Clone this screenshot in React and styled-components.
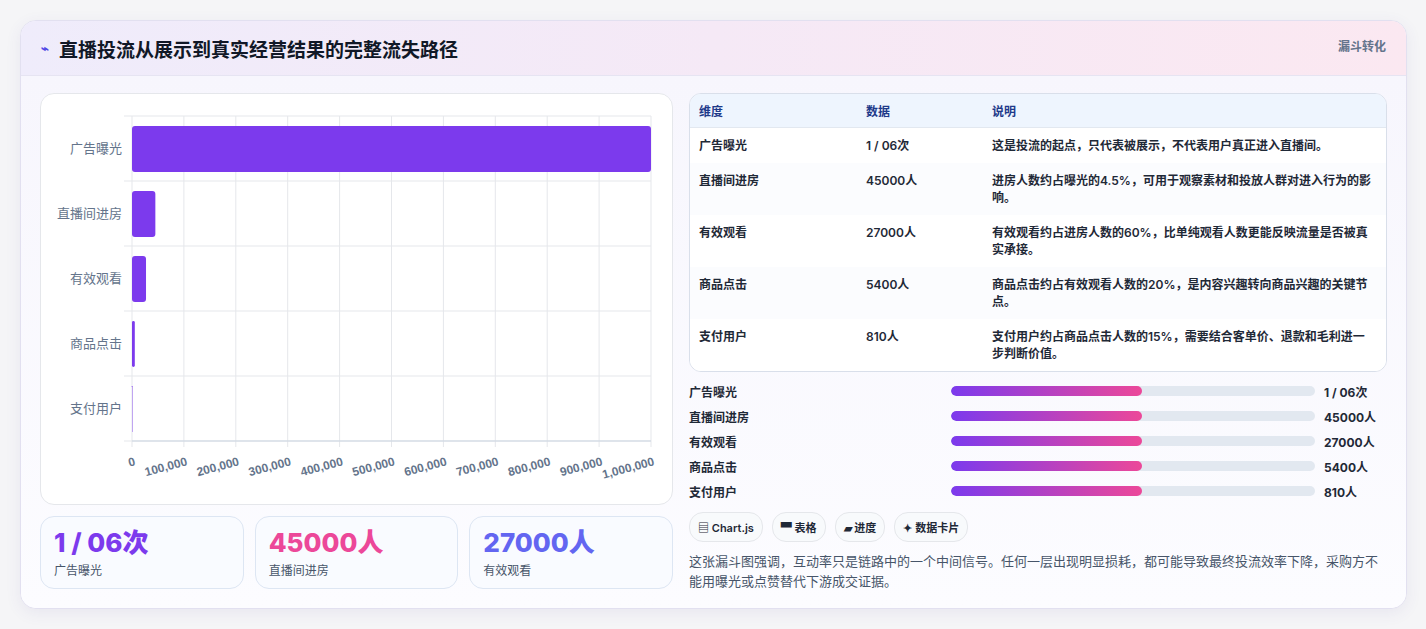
import React from 'react';
import styled, { createGlobalStyle } from 'styled-components';

const GlobalStyle = createGlobalStyle`
  html, body { margin: 0; background: #f5f5f7; }
  body { font-family: Inter, "Noto Sans CJK SC", sans-serif; color: #1e293b; }
`;

const stages = [
  { name: '广告曝光', value: 1000000, data: '1 / 06次', note: '这是投流的起点，只代表被展示，不代表用户真正进入直播间。' },
  { name: '直播间进房', value: 45000, data: '45000人', note: '进房人数约占曝光的4.5%，可用于观察素材和投放人群对进入行为的影响。' },
  { name: '有效观看', value: 27000, data: '27000人', note: '有效观看约占进房人数的60%，比单纯观看人数更能反映流量是否被真实承接。' },
  { name: '商品点击', value: 5400, data: '5400人', note: '商品点击约占有效观看人数的20%，是内容兴趣转向商品兴趣的关键节点。' },
  { name: '支付用户', value: 810, data: '810人', note: '支付用户约占商品点击人数的15%，需要结合客单价、退款和毛利进一步判断价值。' },
];

export default function App() {
  return (
    <>
      <GlobalStyle />
      <Page>
        <Card>
          <Header>
            <Title><Bolt>⌁</Bolt>直播投流从展示到真实经营结果的完整流失路径</Title>
            <Tag>漏斗转化</Tag>
          </Header>
          <Body>
            <Left>
              <ChartBox><FunnelChart /></ChartBox>
              <Stats>
                <Stat><StatNum $c="#7c3aed">1 / 06次</StatNum><StatLabel>广告曝光</StatLabel></Stat>
                <Stat><StatNum $c="#ec4899">45000人</StatNum><StatLabel>直播间进房</StatLabel></Stat>
                <Stat><StatNum $c="#6366f1">27000人</StatNum><StatLabel>有效观看</StatLabel></Stat>
              </Stats>
            </Left>
            <Right>
              <TableWrap>
                <Table>
                  <colgroup>
                    <col style={{ width: 167 }} />
                    <col style={{ width: 126 }} />
                    <col />
                  </colgroup>
                  <thead>
                    <tr><Th>维度</Th><Th>数据</Th><Th>说明</Th></tr>
                  </thead>
                  <tbody>
                    {stages.map((s, i) => (
                      <Tr key={s.name} $alt={i % 2 === 1}>
                        <Td>{s.name}</Td><Td>{s.data}</Td><Td>{s.note}</Td>
                      </Tr>
                    ))}
                  </tbody>
                </Table>
              </TableWrap>
              <Bars>
                {stages.map((s) => (
                  <BarRow key={s.name}>
                    <BarName>{s.name}</BarName>
                    <Track><Fill style={{ width: '52.5%' }} /></Track>
                    <BarVal>{s.data}</BarVal>
                  </BarRow>
                ))}
              </Bars>
              <Chips>
                <Chip>▤ Chart.js</Chip>
                <Chip>▀ 表格</Chip>
                <Chip>▰ 进度</Chip>
                <Chip>✦ 数据卡片</Chip>
              </Chips>
              <Note>这张漏斗图强调，互动率只是链路中的一个中间信号。任何一层出现明显损耗，都可能导致最终投流效率下降，采购方不能用曝光或点赞替代下游成交证据。</Note>
            </Right>
          </Body>
        </Card>
      </Page>
    </>
  );
}

function FunnelChart() {
  const x0 = 91, x1 = 610, y0 = 22, rowH = 65;
  const w = x1 - x0;
  const ticks = Array.from({ length: 11 }, (_, i) => i * 100000);
  return (
    <svg width="632" height="411" viewBox="0 0 632 411">
      {ticks.map((t, i) => {
        const x = x0 + (w * i) / 10;
        return <line key={t} x1={x} x2={x} y1={y0} y2={y0 + rowH * 5 + 6} stroke="#e5e7eb" />;
      })}
      {[0, 1, 2, 3, 4, 5].map((i) => (
        <line key={i} x1={x0 - 8} x2={x1} y1={y0 + rowH * i} y2={y0 + rowH * i} stroke="#e5e7eb" />
      ))}
      <line x1={x0} x2={x1} y1={y0 + rowH * 5} y2={y0 + rowH * 5} stroke="#cbd5e1" />
      {stages.map((s, i) => {
        const bw = (w * s.value) / 1000000;
        const y = y0 + rowH * i + 10;
        return (
          <g key={s.name}>
            <text x={x0 - 10} y={y + 27} textAnchor="end" fontSize="13" fill="#64748b" fontFamily="Noto Sans CJK SC, sans-serif">{s.name}</text>
            <rect x={x0} y={y} width={bw} height={46} rx={Math.min(3, bw / 2)} fill="#7c3aed" />
          </g>
        );
      })}
      {ticks.map((t, i) => {
        const x = x0 + (w * i) / 10;
        return (
          <text key={t} x={x + 4} y={y0 + rowH * 5 + 24} textAnchor="end" fontSize="12" fontWeight="700" fill="#64748b"
            fontFamily="Liberation Sans, sans-serif" transform={`rotate(-15 ${x + 4} ${y0 + rowH * 5 + 24})`}>
            {t.toLocaleString('en-US')}
          </text>
        );
      })}
    </svg>
  );
}

const Page = styled.div`
  padding: 20px;
`;
const Card = styled.div`
  background: #fff;
  border: 1px solid #e2e0f0;
  border-radius: 16px;
  box-shadow: 0 4px 16px rgba(80, 70, 150, 0.08);
  overflow: hidden;
  width: 1385px;
`;
const Header = styled.div`
  height: 54px;
  display: flex;
  align-items: center;
  justify-content: space-between;
  padding: 0 20px;
  background: linear-gradient(90deg, #efecfb, #f5e9f6, #fbe8f1);
  border-bottom: 1px solid #e6e4f2;
`;
const Title = styled.h1`
  margin: 0;
  font-size: 19px;
  font-weight: 700;
  color: #111827;
  display: flex;
  align-items: center;
`;
const Bolt = styled.span`
  color: #4f46e5;
  font-size: 13px;
  margin-right: 10px;
`;
const Tag = styled.span`
  align-self: flex-start;
  margin-top: 16px;
  font-size: 12px;
  font-weight: 700;
  color: #64748b;
`;
const Body = styled.div`
  display: flex;
  gap: 16px;
  padding: 17px 19px 17px 19px;
  background: linear-gradient(180deg, #f7f6fd, #fcfcff);
`;
const Left = styled.div`
  width: 633px;
  display: flex;
  flex-direction: column;
  gap: 11px;
`;
const ChartBox = styled.div`
  height: 410px;
  background: #fff;
  border: 1px solid #e5e7eb;
  border-radius: 14px;
  overflow: hidden;
`;
const Stats = styled.div`
  display: grid;
  grid-template-columns: repeat(3, 1fr);
  gap: 11px;
`;
const Stat = styled.div`
  height: 73px;
  box-sizing: border-box;
  padding: 10px 13px;
  border: 1px solid #dde6f3;
  border-radius: 14px;
  background: #f9fbff;
`;
const StatNum = styled.div`
  font-size: 26px;
  font-weight: 800;
  color: ${(p) => p.$c};
  line-height: 32px;
`;
const StatLabel = styled.div`
  font-size: 12px;
  color: #475569;
  margin-top: 2px;
`;
const Right = styled.div`
  flex: 1;
  display: flex;
  flex-direction: column;
`;
const TableWrap = styled.div`
  border: 1px solid #d9dfea;
  border-radius: 12px;
  overflow: hidden;
  background: #fff;
`;
const Table = styled.table`
  width: 100%;
  table-layout: fixed;
  border-collapse: collapse;
  font-size: 12px;
`;
const Th = styled.th`
  text-align: left;
  font-weight: 700;
  color: #1e3a8a;
  background: #eef5fe;
  padding: 8px 9px;
  height: 16px;
  border-bottom: 1px solid #e2e8f0;
`;
const Tr = styled.tr`
  background: ${(p) => (p.$alt ? '#fbfcfe' : '#fff')};
  & + & td { border-top: 1px solid #e8edf3; }
`;
const Td = styled.td`
  padding: 9px 9px;
  vertical-align: top;
  font-weight: 600;
  color: #1f2937;
  line-height: 17px;
  &:last-child { padding-right: 10px; }
`;
const Bars = styled.div`
  margin-top: 10px;
  display: flex;
  flex-direction: column;
  gap: 7px;
`;
const BarRow = styled.div`
  display: grid;
  grid-template-columns: 262px 373px 1fr;
  align-items: center;
  height: 18px;
`;
const BarName = styled.span`
  font-size: 12px;
  font-weight: 600;
  color: #1f2937;
`;
const Track = styled.div`
  height: 10px;
  background: #e2e8f0;
  border-radius: 5px;
  margin-right: 9px;
  overflow: hidden;
`;
const Fill = styled.div`
  height: 100%;
  border-radius: 5px;
  background: linear-gradient(90deg, #7c3aed, #ec4899);
`;
const BarVal = styled.span`
  font-size: 12px;
  font-weight: 700;
  color: #1f2937;
`;
const Chips = styled.div`
  display: flex;
  gap: 9px;
  margin-top: 12px;
`;
const Chip = styled.span`
  font-size: 11px;
  font-weight: 600;
  color: #1f2937;
  background: #f8fafc;
  border: 1px solid #e5e7eb;
  border-radius: 14px;
  padding: 6px 8px;
`;
const Note = styled.p`
  margin: 9px 0 0;
  font-size: 13px;
  line-height: 20px;
  color: #475569;
`;
